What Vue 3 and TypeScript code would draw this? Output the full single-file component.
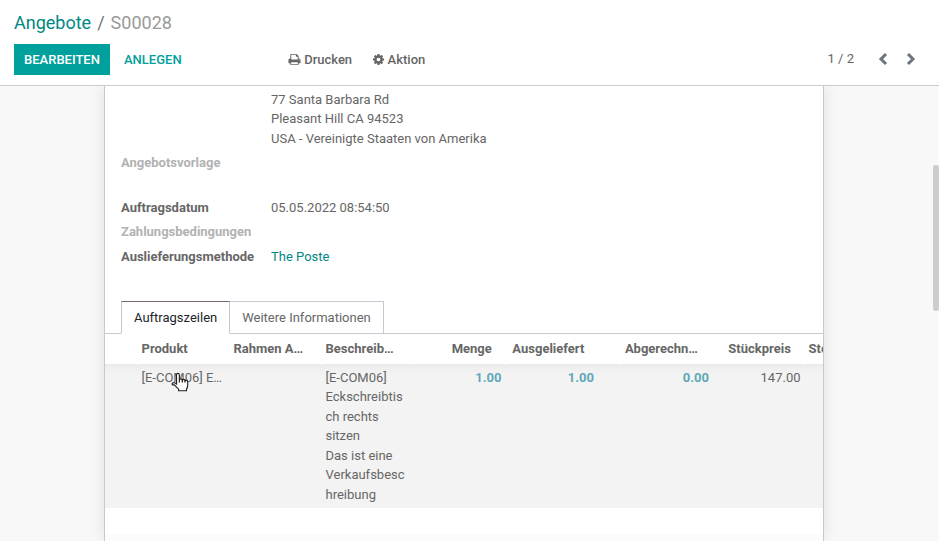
<script setup lang="ts">
interface Field {
  label: string
  value: string
  muted?: boolean
  link?: boolean
  kind?: string
}

const address: string[] = ['77 Santa Barbara Rd', 'Pleasant Hill CA 94523', 'USA - Vereinigte Staaten von Amerika']

const fields: Field[] = [
  { label: 'Angebotsvorlage', value: '', muted: true, kind: 'template' },
  { label: 'Auftragsdatum', value: '05.05.2022 08:54:50' },
  { label: 'Zahlungsbedingungen', value: '', muted: true },
  { label: 'Auslieferungsmethode', value: 'The Poste', link: true },
]

const headers = [
  { text: '', cls: '' },
  { text: 'Produkt', cls: 'tick' },
  { text: 'Rahmen A…', cls: '' },
  { text: 'Beschreib…', cls: 'tick' },
  { text: 'Menge', cls: 'num tick' },
  { text: 'Ausgeliefert', cls: 'num tick' },
  { text: '', cls: '' },
  { text: 'Abgerechn…', cls: 'num tick wide' },
  { text: 'Stückpreis', cls: 'num' },
  { text: 'Steuern', cls: 'tick' },
]

const description: string[] = ['[E-COM06]', 'Eckschreibtis', 'ch rechts', 'sitzen', 'Das ist eine', 'Verkaufsbesc', 'hreibung']
</script>

<template>
  <div class="app">
    <header class="panel">
      <div class="crumbs">
        <a class="crumb-link">Angebote</a><span class="slash">/</span><span class="current">S00028</span>
      </div>
      <div class="actions">
        <button class="btn primary">BEARBEITEN</button>
        <button class="btn flat">ANLEGEN</button>
        <div class="menus">
          <span class="menu">
            <svg class="print" viewBox="0 0 1792 1792"><path d="M448 1536h896v-256h-896v256zm0-640h896v-384h-160q-40 0-68-28t-28-68v-160h-640v640zm1152 64q0-26-19-45t-45-19-45 19-19 45 19 45 45 19 45-19 19-45zm128 0v416q0 13-9.500 22.500t-22.500 9.500h-224v160q0 40-28 68t-68 28h-960q-40 0-68-28t-28-68v-160h-224q-13 0-22.500-9.500t-9.500-22.500v-416q0-79 56.500-135.500t135.500-56.500h64v-544q0-40 28-68t68-28h672q40 0 88 20t76 48l152 152q28 28 48 76t20 88v256h64q79 0 135.500 56.500t56.500 135.500z" /></svg>
            Drucken
          </span>
          <span class="menu">
            <svg class="cog" viewBox="0 0 1792 1792"><path d="M1152 896q0-106-75-181t-181-75-181 75-75 181 75 181 181 75 181-75 75-181zm512-109v222q0 12-8 23t-20 13l-185 28q-19 54-39 91 35 50 107 138 10 12 10 25t-9 23q-27 37-99 108t-94 71q-12 0-26-9l-138-108q-44 23-91 38-16 136-29 186-7 28-36 28h-222q-14 0-24.500-8.500t-11.500-21.500l-28-184q-49-16-90-37l-141 107q-10 9-25 9-14 0-25-11-126-114-165-168-7-10-7-23 0-12 8-23 15-21 51-66.500t54-70.500q-27-50-41-99l-183-27q-13-2-21-12.500t-8-23.500v-222q0-12 8-23t19-13l186-28q14-46 39-92-40-57-107-138-10-12-10-24 0-10 9-23 26-36 98.500-107.500t94.500-71.500q13 0 26 10l138 107q44-23 91-38 16-136 29-186 7-28 36-28h222q14 0 24.500 8.500t11.500 21.500l28 184q49 16 90 37l142-107q9-9 24-9 13 0 25 10 129 119 165 170 7 8 7 22 0 12-8 23-15 21-51 66.500t-54 70.500q26 50 41 98l183 28q13 2 21 12.500t8 23.500z" /></svg>
            Aktion
          </span>
        </div>
        <div class="pager">
          <span class="count">1 / 2</span>
          <svg viewBox="0 0 10 14"><path d="M8 2 3 7l5 5" /></svg>
          <svg viewBox="0 0 10 14"><path d="m2 2 5 5-5 5" /></svg>
        </div>
      </div>
    </header>

    <main class="content">
      <section class="sheet">
        <div class="address">
          <div v-for="line in address" :key="line">{{ line }}</div>
        </div>
        <dl class="fields">
          <div v-for="f in fields" :key="f.label" class="field" :class="f.kind">
            <dt :class="{ muted: f.muted }">{{ f.label }}</dt>
            <dd :class="{ link: f.link }">{{ f.value }}</dd>
          </div>
        </dl>
        <nav class="tabs">
          <span class="tab active">Auftragszeilen</span>
          <span class="tab">Weitere Informationen</span>
        </nav>
        <div class="lines">
          <div class="row head">
            <div v-for="(h, i) in headers" :key="i" class="cell" :class="h.cls"><span>{{ h.text }}</span></div>
          </div>
          <div class="row body">
            <div class="cell"></div>
            <div class="cell product">
              [E-COM06] E…
              <svg class="pointer" viewBox="0 0 17 19"><path d="M5.300 11.500 5.100 3q0-1.700 1.400-1.700T7.900 3v4.500q.2-1 1.400-1t1.400 1.300q.3-.8 1.300-.8t1.300 1.300q.3-.6 1.200-.6 1.300 0 1.300 1.500v3.500q0 2.600-1.200 3.700v1.400H7.200v-1.500L3.100 12.300H1.600q-1-.7-.3-1.700 1.500-1.200 4 .9z" /><path d="M7.900 7.500V10m2.800-2.200V10m2.600-1.700V10" /></svg>
            </div>
            <div class="cell"></div>
            <div class="cell"><div v-for="d in description" :key="d">{{ d }}</div></div>
            <div class="cell num info">1.00</div>
            <div class="cell num info">1.00</div>
            <div class="cell"></div>
            <div class="cell num info">0.00</div>
            <div class="cell num">147.00</div>
            <div class="cell"></div>
          </div>
        </div>
        <div class="footer-strip"></div>
      </section>
      <div class="scrollbar"></div>
    </main>
  </div>
</template>

<style>
body {
  margin: 0;
  overflow: hidden;
}
</style>

<style scoped>
.app {
  width: 939px;
  height: 541px;
  display: flex;
  flex-direction: column;
  overflow: hidden;
  background: #f8f8f8;
  color: #666;
  font: 13px/19.5px Roboto, sans-serif;
}
.app * {
  box-sizing: border-box;
}
.panel {
  position: relative;
  z-index: 1;
  height: 86px;
  flex: none;
  padding: 9px 14px 0;
  background: #fff;
  border-bottom: 1px solid #c9ccd2;
}
.crumbs {
  height: 27px;
  display: flex;
  font-size: 18px;
  line-height: 27px;
}
.crumb-link {
  color: #008784;
}
.slash {
  margin: 0 6px;
  color: #6c757d;
}
.current {
  color: #999;
}
.actions {
  display: flex;
  align-items: center;
  height: 31px;
  margin-top: 8px;
}
.btn {
  height: 31px;
  padding: 0 10px;
  border: 0;
  font: 500 13px/31px Roboto, sans-serif;
}
.primary {
  width: 96px;
  background: #00a09d;
  color: #fff;
}
.flat {
  margin-left: 4px;
  background: none;
  color: #00a09d;
}
.menus {
  display: flex;
  gap: 19.5px;
  margin-left: 96.5px;
}
.menu {
  display: flex;
  align-items: center;
  gap: 3px;
  font-weight: 500;
}
.menu svg {
  width: 13px;
  height: 13px;
  fill: #666;
}
.pager {
  display: flex;
  align-items: center;
  margin-left: auto;
  padding-right: 9px;
}
.count {
  margin-right: 24px;
  padding-bottom: 2px;
}
.pager svg {
  width: 10px;
  height: 14px;
  margin-bottom: 1px;
  fill: none;
  stroke: #6c757d;
  stroke-width: 3;
}
.pager svg + svg {
  margin-left: 18px;
}
.content {
  flex: 1;
  display: flex;
  min-height: 0;
  padding-left: 104px;
}
.sheet {
  width: 720px;
  display: flex;
  flex-direction: column;
  overflow: hidden;
  padding-top: 3.75px;
  background: #fff;
  border: solid #c8c8d3;
  border-width: 0 1px;
  box-shadow: 0 0 16px rgba(0, 0, 0, 0.1);
  clip-path: inset(0 -20px 0 -20px);
}
.address {
  padding-left: 166px;
}
.fields {
  margin: 0;
  padding-left: 16px;
}
.field {
  display: flex;
  height: 24.5px;
  padding-top: 4.5px;
}
.template {
  height: 45px;
}
dt {
  width: 150px;
  font-weight: 700;
}
dt.muted {
  color: #b2b2b2;
}
dd {
  margin: 0;
}
.link {
  color: #008784;
}
.tabs {
  display: flex;
  height: 33px;
  margin-top: 34.25px;
  padding-left: 16px;
  border-bottom: 1px solid #c8c8d3;
}
.tab {
  height: 33px;
  padding: 6px 12px 0;
  border: solid #c8c8d3;
  border-width: 1px 1px 1px 0;
}
.tab.active {
  border-left-width: 1px;
  border-top-color: #7c6576;
  border-bottom-color: #fff;
  background: #fff;
  color: #212529;
}
.row {
  display: grid;
  grid-template-columns: 32.5px 92px 92px 92px 92px 92.5px 22.5px 92.5px 91.5px 92px;
}
.cell {
  padding: 5px 4px 0;
  white-space: nowrap;
}
.num {
  text-align: right;
}
.head {
  height: 30px;
  font-weight: 700;
}
.head .num {
  padding-right: 13.7px;
}
.head .wide {
  padding-right: 15px;
}
.head .cell {
  background: #fff;
}
.head .tick {
  position: relative;
}
.head .tick::after {
  content: '';
  position: absolute;
  left: -1px;
  bottom: -1px;
  width: 1px;
  height: 1px;
  background: #fff;
}
.body {
  height: 144px;
  background: linear-gradient(#e9e9e9, #f0f0f0 5px, #f3f3f3 12px);
}
.body .cell {
  padding-top: 3.75px;
}
.product {
  position: relative;
}
.pointer {
  position: absolute;
  left: 33px;
  top: 8px;
  width: 18px;
  height: 20px;
  fill: #fff;
  stroke: #222;
  stroke-width: 1.1;
}
.info {
  color: #5fa8b8;
  font-weight: 700;
}
.footer-strip {
  height: 7px;
  margin-top: 26px;
  background: #fbfbfb;
}
.scrollbar {
  width: 6px;
  height: 146px;
  margin: 79px 0 0 auto;
  border-radius: 3px;
  background: #cdcdcd;
}
</style>
